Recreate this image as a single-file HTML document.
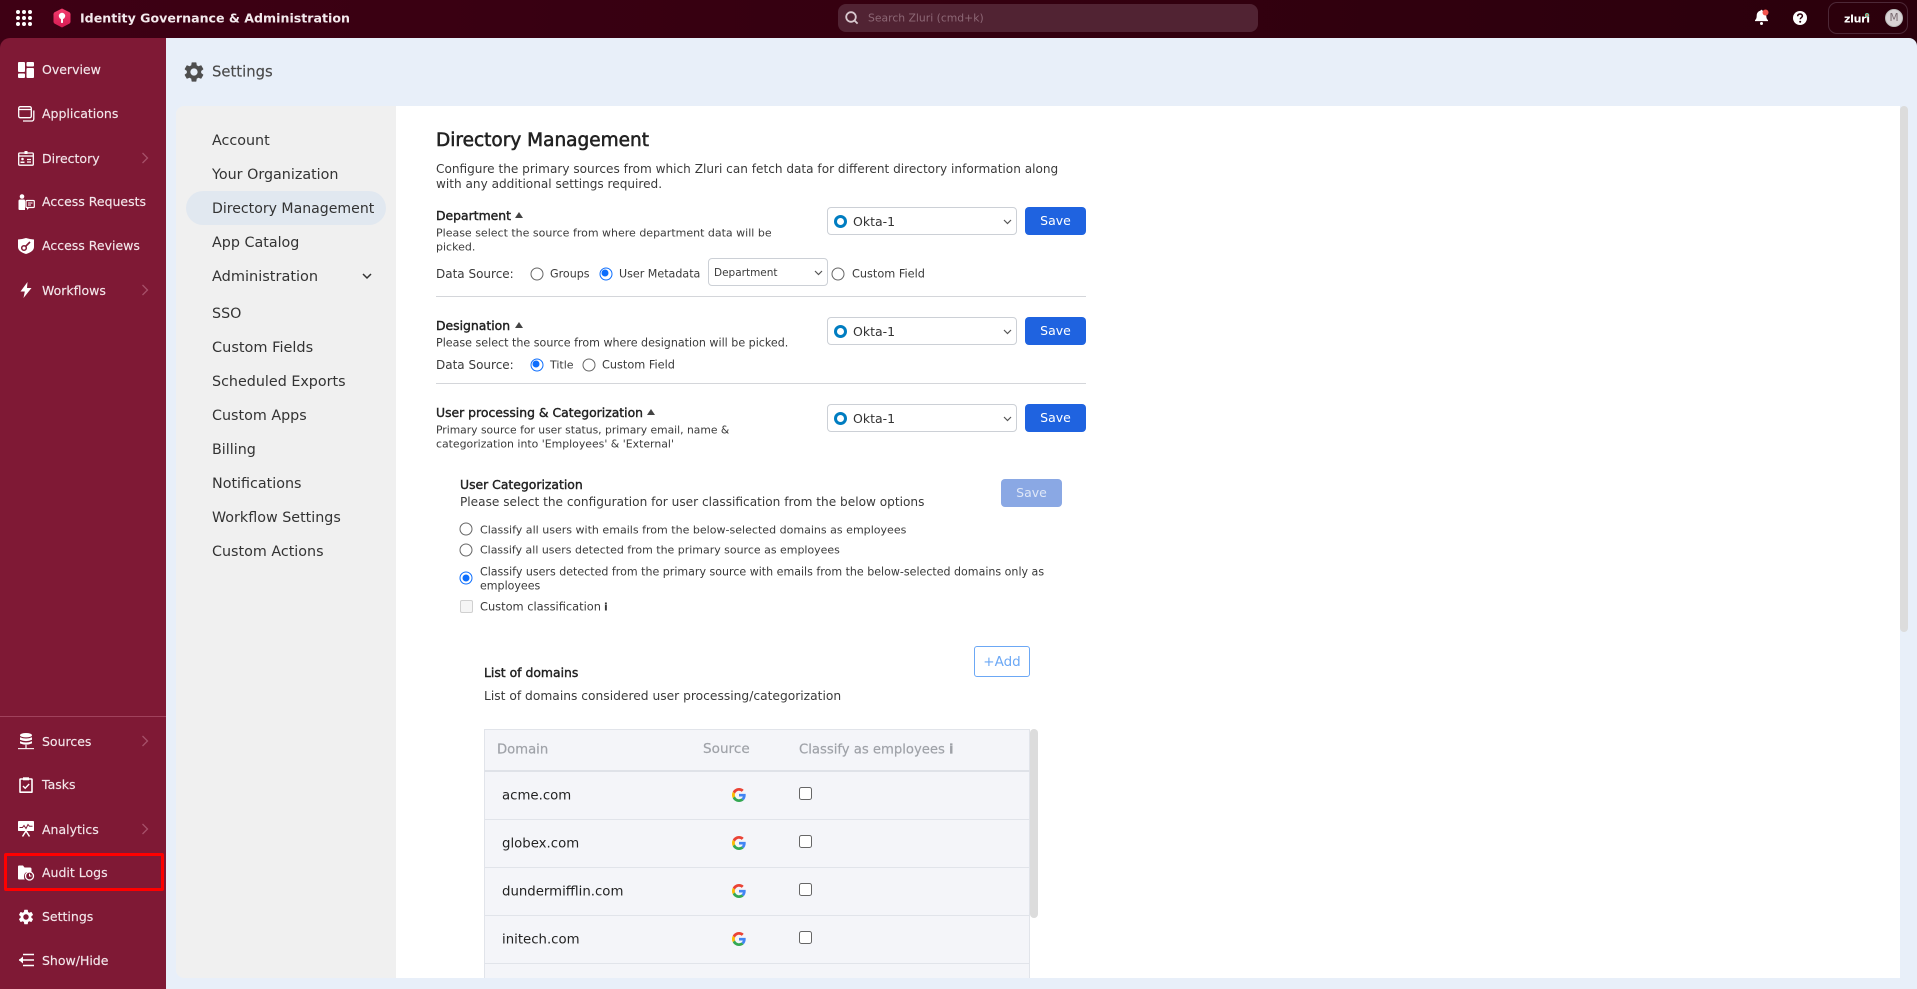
<!DOCTYPE html>
<html lang="en"><head><meta charset="utf-8"><title>Settings</title>
<style>
*{box-sizing:border-box}
html,body{margin:0;padding:0;width:1917px;height:989px;overflow:hidden;background:#e8eff9;font-family:"DejaVu Sans","Liberation Sans",sans-serif}
.a{position:absolute}
.t{position:absolute;white-space:nowrap;line-height:1;transform:translateY(calc(-50% + 1px))}
.s{color:#f3e6ea;font-size:12.5px;left:42px;-webkit-text-stroke:.15px #f3e6ea}
.n{color:#333;font-size:14.3px;left:212px}
.m{font-size:11px;color:#3a3a3a;left:436px}
.b{font-size:12.4px;color:#222;left:436px;-webkit-text-stroke:.4px #222}
.rad{position:absolute;width:13px;height:13px;border-radius:50%;border:1px solid #666;background:#fff;transform:translate(-50%,-50%)}
.rad.on{border:1.5px solid #0d6efd}
.rad.on:after{content:"";position:absolute;left:1.5px;top:1.5px;width:7px;height:7px;border-radius:50%;background:#0d6efd}
.sel{position:absolute;left:827px;width:190px;height:28px;border:1px solid #ccd0d6;border-radius:4px;background:#fff}
.ok{position:absolute;left:6px;top:7px;width:13px;height:13px;border-radius:50%;border:3.5px solid #007dc1}
.sel b{position:absolute;left:25px;top:7.5px;font-weight:400;font-size:12.5px;color:#333;line-height:1;white-space:nowrap}
.btn{position:absolute;left:1025px;width:61px;height:28px;background:#1f63e0;color:#fff;border-radius:4px;font-size:12.5px;line-height:27px;text-align:center}
.hr{position:absolute;left:436px;width:650px;height:1px;background:#d4d6da}
.tri{position:absolute;width:0;height:0;border-left:4px solid transparent;border-right:4px solid transparent;border-bottom:6px solid #444}
.rl{position:absolute;left:484px;width:546px;height:1px;background:#e1e4ea}
.rt{font-size:13.3px;color:#222;left:502px}
.th{font-size:13.2px;color:#9fa2a8;-webkit-text-stroke:.2px #9fa2a8}
.cb{position:absolute;left:799px;width:13px;height:13px;border:1px solid #666;border-radius:2.5px;background:#fff}
svg{position:absolute;overflow:visible}
</style></head><body>

<svg width="0" height="0" style="left:0;top:0"><defs>
<symbol id="gear" viewBox="0 0 24 24"><path d="M19.14 12.94c.04-.3.06-.61.06-.94 0-.32-.02-.64-.07-.94l2.03-1.58c.18-.14.23-.41.12-.61l-1.92-3.32c-.12-.22-.37-.29-.59-.22l-2.39.96c-.5-.38-1.03-.7-1.62-.94l-.36-2.54c-.04-.24-.24-.41-.48-.41h-3.84c-.24 0-.43.17-.47.41l-.36 2.54c-.59.24-1.13.57-1.62.94l-2.39-.96c-.22-.08-.47 0-.59.22L2.74 8.87c-.12.21-.08.47.12.61l2.03 1.58c-.05.3-.09.63-.09.94s.02.64.07.94l-2.03 1.58c-.18.14-.23.41-.12.61l1.92 3.32c.12.22.37.29.59.22l2.39-.96c.5.38 1.03.7 1.62.94l.36 2.54c.05.24.24.41.48.41h3.84c.24 0 .44-.17.47-.41l.36-2.54c.59-.24 1.13-.56 1.62-.94l2.39.96c.22.08.47 0 .59-.22l1.92-3.32c.12-.22.07-.47-.12-.61l-2.01-1.58zM12 15.6c-1.98 0-3.6-1.62-3.6-3.6s1.62-3.6 3.6-3.6 3.6 1.62 3.6 3.6-1.62 3.6-3.6 3.6z"/></symbol>
<symbol id="g" viewBox="0 0 48 48"><path fill="#EA4335" d="M24 9.5c3.54 0 6.71 1.22 9.21 3.6l6.85-6.85C35.9 2.38 30.47 0 24 0 14.62 0 6.51 5.38 2.56 13.22l7.98 6.19C12.43 13.72 17.74 9.5 24 9.5z"/><path fill="#4285F4" d="M46.98 24.55c0-1.57-.15-3.09-.38-4.55H24v9.02h12.94c-.58 2.96-2.26 5.48-4.78 7.18l7.73 6c4.51-4.18 7.09-10.36 7.09-17.65z"/><path fill="#FBBC05" d="M10.53 28.59c-.48-1.45-.76-2.99-.76-4.59s.27-3.14.76-4.59l-7.98-6.19C.92 16.46 0 20.12 0 24c0 3.88.92 7.54 2.56 10.78l7.97-6.19z"/><path fill="#34A853" d="M24 48c6.48 0 11.93-2.13 15.89-5.81l-7.73-6c-2.15 1.45-4.92 2.3-8.16 2.3-6.26 0-11.57-4.22-13.47-9.91l-7.98 6.19C6.51 42.62 14.62 48 24 48z"/></symbol>
<linearGradient id="lg" x1="0" y1="0" x2="0" y2="1"><stop offset="0" stop-color="#f23d6d"/><stop offset="1" stop-color="#d81b54"/></linearGradient>
</defs></svg>

<!-- top bar -->
<div class="a" style="left:0;top:0;width:1917px;height:50px;background:linear-gradient(90deg,#3e0014,#2b000c)"></div>
<div class="a" style="left:166px;top:38px;width:1751px;height:951px;background:#e8eff9;border-top-right-radius:8px"></div>
<svg style="left:16px;top:10px" width="16" height="16" fill="#fff"><circle cx="2" cy="2" r="2"/><circle cx="8" cy="2" r="2"/><circle cx="14" cy="2" r="2"/><circle cx="2" cy="8" r="2"/><circle cx="8" cy="8" r="2"/><circle cx="14" cy="8" r="2"/><circle cx="2" cy="14" r="2"/><circle cx="8" cy="14" r="2"/><circle cx="14" cy="14" r="2"/></svg>
<svg style="left:53px;top:8px" width="18" height="20" viewBox="0 0 18 20"><path d="M9 .5l7.2 3.6q1.3.7 1.3 2v7.6q0 1.3-1.3 2L9 19.5l-7.2-3.8Q.5 15 .5 13.7V6.100q0-1.300 1.300-2z" fill="url(#lg)"/><circle cx="9" cy="8" r="3.200" fill="#fff"/><rect x="8" y="9" width="2" height="6" rx=".8" fill="#fff"/></svg>
<div class="t" style="left:80px;top:18px;font-size:12.6px;font-weight:700;color:#f3e9ec">Identity Governance &amp; Administration</div>

<div class="a" style="left:838px;top:4px;width:420px;height:28px;background:#512333;border-radius:8px"></div>
<svg style="left:845px;top:11px" width="14" height="14" fill="none" stroke="#d8c8ce" stroke-width="1.8"><circle cx="6" cy="6" r="4.8"/><path d="M9.6 9.6l3 3"/></svg>
<div class="t" style="left:868px;top:18px;font-size:10.8px;color:#8d6876">Search Zluri (cmd+k)</div>

<svg style="left:1754px;top:9px" width="16" height="17" viewBox="0 0 16 17"><path d="M6.5 1.800a1 1 0 0 1 2 0c2.800.5 3.800 2.700 3.800 5 0 2.300.6 3.400 1.700 4.500v.8H1v-.8C2.100 10.200 2.700 9.100 2.700 6.800c0-2.300 1-4.500 3.800-5z" fill="#fff"/><circle cx="7.500" cy="14.500" r="1.500" fill="#fff"/><circle cx="11.500" cy="3.500" r="3" fill="#f2544d"/></svg>
<svg style="left:1793px;top:11px" width="14" height="14"><circle cx="7" cy="7" r="7" fill="#fff"/><path d="M4.700 5.300c0-1.500 1-2.300 2.400-2.300 1.300 0 2.300.8 2.300 2 0 1.700-2.200 1.700-2.200 3.300" fill="none" stroke="#2b000c" stroke-width="1.500"/><circle cx="7.200" cy="10.700" r="1" fill="#2b000c"/></svg>
<div class="a" style="left:1828px;top:2px;width:80px;height:32px;border:1px solid #4d2837;border-radius:9px"></div>
<div class="t" style="left:1844px;top:18px;font-size:11px;font-weight:700;color:#fff;letter-spacing:-.3px">zluri</div>
<div class="a" style="left:1865px;top:13px;width:4px;height:4px;border-radius:50%;background:#e85a4f;border:1px solid #6fd3a8"></div>
<div class="a" style="left:1885px;top:9px;width:18px;height:18px;border-radius:50%;background:#d9d3d5;border:1px solid #bbb;color:#7a6a70;font-size:10.5px;line-height:16px;text-align:center">M</div>

<!-- sidebar -->
<div class="a" style="left:0;top:38px;width:166px;height:951px;background:#7f1935;border-top-left-radius:10px"></div>
<div class="a" style="left:0;top:716px;width:166px;height:1px;background:#a0415c"></div>
<div class="a" style="left:4px;top:853px;width:160px;height:38px;border:3px solid #f00;border-radius:2px"></div>

<svg style="left:18px;top:62px" width="16" height="16" fill="#fff"><rect width="7" height="10" rx="1"/><rect y="11.500" width="7" height="4.500" rx="1"/><rect x="8.500" width="7.500" height="4.500" rx="1"/><rect x="8.500" y="6" width="7.500" height="10" rx="1"/></svg>
<div class="t s" style="top:69px">Overview</div>
<svg style="left:18px;top:106px" width="17" height="16" fill="none" stroke="#fff" stroke-width="1.300"><rect x=".7" y=".7" width="12.600" height="11" rx="1.500"/><path d="M.7 3.500h12.600"/><path d="M15.800 4.500v8.500a2 2 0 0 1-2 2H5"/></svg>
<div class="t s" style="top:113px">Applications</div>
<svg style="left:18px;top:150px" width="16" height="16" fill="none" stroke="#fff" stroke-width="1.300"><rect x=".7" y="3" width="14.600" height="12.200" rx="1"/><path d="M.7 6h14.600"/><rect x="6.500" y="1" width="3" height="3" fill="#fff" stroke="none"/><circle cx="4.500" cy="9" r="1.300" fill="#fff" stroke="none"/><path d="M2.500 13h4v-1.500h-4z" fill="#fff" stroke="none"/><path d="M9 9.500h4M9 12h4"/></svg>
<div class="t s" style="top:158px">Directory</div>
<svg style="left:18px;top:194px" width="17" height="17" fill="#fff"><circle cx="4" cy="2.500" r="2.300"/><path d="M.5 7q0-1.500 1.500-1.500h4Q7 5.500 7 7v9H1.500Q.5 16 .5 15z"/><rect x="8" y="6.500" width="8.300" height="7" rx="1" fill="none" stroke="#fff" stroke-width="1.200"/><path d="M10 9h4.500M10 11h3" stroke="#fff"/><path d="M9 13.500v2.500l2.500-2.500z"/></svg>
<div class="t s" style="top:201px">Access Requests</div>
<svg style="left:18px;top:238px" width="16" height="16"><path d="M0 1.500q4-.2 8-1.500 4 1.300 8 1.500v7.500q0 4.500-8 7-8-2.500-8-7z" fill="#fff"/><circle cx="6" cy="10" r="2.300" fill="none" stroke="#7f1935" stroke-width="1.500"/><path d="M7.500 8.500l4.500-4.500" stroke="#7f1935" stroke-width="1.600"/></svg>
<div class="t s" style="top:245px">Access Reviews</div>
<svg style="left:20px;top:282px" width="12" height="16"><path d="M7.500 0L.5 9.500h4.300L3.500 16l8-10H7z" fill="#fff"/></svg>
<div class="t s" style="top:290px">Workflows</div>

<svg style="left:18px;top:733px" width="16" height="17" fill="#fff"><ellipse cx="8" cy="2.200" rx="6" ry="2.200"/><path d="M2 4.200q6 2.600 12 0v2.600q-6 2.600-12 0zM2 8.200q6 2.600 12 0v2.200q-6 2.600-12 0z"/><rect x="7.400" y="12" width="1.200" height="3.500"/><rect y="15" width="16" height="1.200" opacity=".9"/></svg>
<div class="t s" style="top:741px">Sources</div>
<svg style="left:19px;top:777px" width="14" height="16" fill="none" stroke="#fff" stroke-width="1.600"><rect x="1" y="2" width="12" height="13.200" rx=".5"/><rect x="4" y=".3" width="6" height="3" fill="#fff" stroke="none"/><path d="M4 9l2.200 2.200 4-4.200" stroke-width="1.400"/></svg>
<div class="t s" style="top:784px">Tasks</div>
<svg style="left:18px;top:821px" width="16" height="17" fill="#fff"><rect width="16" height="10" rx=".8"/><path d="M1.500 6.500h3l1.500-2 2 3 2-4 1.500 1.800h3" fill="none" stroke="#7f1935" stroke-width="1"/><path d="M8 10L4.500 15.500M8 10l3.500 5.500" stroke="#fff" stroke-width="1.500"/></svg>
<div class="t s" style="top:829px">Analytics</div>
<svg style="left:18px;top:865px" width="16" height="16" fill="#fff"><path d="M0 1.500Q0 .5 1 .5h4l1.500 2H12q1.500 0 1.500 1.500v3H9q-3 1-3 4.500 0 2 .8 3H1q-1 0-1-1z"/><circle cx="11.500" cy="11" r="4" fill="none" stroke="#fff" stroke-width="1.300"/><path d="M11.500 8.800V11h2" fill="none" stroke="#fff"/></svg>
<div class="t s" style="top:872px">Audit Logs</div>
<svg style="left:17px;top:908px" width="18" height="18" fill="#fff"><use href="#gear"/></svg>
<div class="t s" style="top:916px">Settings</div>
<svg style="left:18px;top:953px" width="16" height="14" fill="none" stroke="#fff" stroke-width="1.500"><path d="M5 1.500h11M1 7h15M5 12.500h11"/><path d="M5 3.500L.8 7 5 10.500z" fill="#fff" stroke="none"/></svg>
<div class="t s" style="top:960px">Show/Hide</div>

<svg style="left:141px;top:152px" width="8" height="12" fill="none" stroke="#a65069" stroke-width="1.300"><path d="M1.500 1l5 5-5 5"/></svg>
<svg style="left:141px;top:284px" width="8" height="12" fill="none" stroke="#a65069" stroke-width="1.300"><path d="M1.500 1l5 5-5 5"/></svg>
<svg style="left:141px;top:735px" width="8" height="12" fill="none" stroke="#a65069" stroke-width="1.300"><path d="M1.500 1l5 5-5 5"/></svg>
<svg style="left:141px;top:823px" width="8" height="12" fill="none" stroke="#a65069" stroke-width="1.300"><path d="M1.500 1l5 5-5 5"/></svg>

<!-- settings header -->
<svg style="left:182px;top:60px" width="24" height="24" fill="#4e4e4e"><use href="#gear"/></svg>
<div class="t" style="left:212px;top:72px;font-size:14.8px;color:#4a4a4a;-webkit-text-stroke:.15px #4a4a4a">Settings</div>

<!-- panels -->
<div class="a" style="left:176px;top:106px;width:220px;height:872px;background:#f0f0f0;border-radius:8px 0 0 8px"></div>
<div class="a" style="left:396px;top:106px;width:1504px;height:872px;background:#fff"></div>
<div class="a" style="left:1900px;top:106px;width:8px;height:526px;background:#dcdcdc;border-radius:4px"></div>
<div class="a" style="left:186px;top:191px;width:200px;height:34px;background:#e1e8f0;border-radius:17px"></div>

<div class="t n" style="top:140px">Account</div>
<div class="t n" style="top:174px">Your Organization</div>
<div class="t n" style="top:208px;font-size:14.1px">Directory Management</div>
<div class="t n" style="top:242px">App Catalog</div>
<div class="t n" style="top:276px;font-size:14.5px">Administration</div>
<svg style="left:362px;top:273px" width="10" height="7" fill="none" stroke="#333" stroke-width="1.500"><path d="M1 1l4 4 4-4"/></svg>
<div class="t n" style="top:313px">SSO</div>
<div class="t n" style="top:347px;font-size:14.5px">Custom Fields</div>
<div class="t n" style="top:381px">Scheduled Exports</div>
<div class="t n" style="top:415px">Custom Apps</div>
<div class="t n" style="top:449px">Billing</div>
<div class="t n" style="top:483px">Notifications</div>
<div class="t n" style="top:517px">Workflow Settings</div>
<div class="t n" style="top:551px">Custom Actions</div>

<!-- main -->
<div class="t" style="left:436px;top:140px;font-size:18.5px;color:#222;-webkit-text-stroke:.55px #222">Directory Management</div>
<div class="t m" style="top:168px;font-size:12.1px">Configure the primary sources from which Zluri can fetch data for different directory information along</div>
<div class="t m" style="top:183px;font-size:12.1px">with any additional settings required.</div>

<div class="t b" style="top:215px">Department</div><div class="tri" style="left:515px;top:212px"></div>
<div class="t m" style="top:232px">Please select the source from where department data will be</div>
<div class="t m" style="top:246px">picked.</div>
<div class="sel" style="top:207px"><i class="ok"></i><b>Okta-1</b><svg style="left:175px;top:11px" width="9" height="6" fill="none" stroke="#555" stroke-width="1.200"><path d="M1 1l3.500 3.500L8 1"/></svg></div>
<div class="btn" style="top:207px">Save</div>
<div class="t m" style="top:273px;font-size:12px">Data Source:</div>
<i class="rad" style="left:536.500px;top:273.500px"></i><div class="t m" style="left:550px;top:273px;font-size:11.1px">Groups</div>
<i class="rad on" style="left:605.500px;top:273.500px"></i><div class="t m" style="left:619px;top:273px;font-size:11.1px">User Metadata</div>
<div class="a" style="left:708px;top:258px;width:120px;height:28px;border:1px solid #ccd0d6;border-radius:4px;background:#fff"></div>
<div class="t m" style="left:714px;top:272px;font-size:10.5px">Department</div>
<svg style="left:814px;top:270px" width="9" height="6" fill="none" stroke="#555" stroke-width="1.200"><path d="M1 1l3.500 3.500L8 1"/></svg>
<i class="rad" style="left:838px;top:273.500px"></i><div class="t m" style="left:852px;top:273px;font-size:11.3px">Custom Field</div>
<div class="hr" style="top:296px"></div>

<div class="t b" style="top:325px">Designation</div><div class="tri" style="left:515px;top:322px"></div>
<div class="t m" style="top:342px;font-size:11.1px">Please select the source from where designation will be picked.</div>
<div class="sel" style="top:317px"><i class="ok"></i><b>Okta-1</b><svg style="left:175px;top:11px" width="9" height="6" fill="none" stroke="#555" stroke-width="1.200"><path d="M1 1l3.500 3.500L8 1"/></svg></div>
<div class="btn" style="top:317px">Save</div>
<div class="t m" style="top:364px;font-size:12px">Data Source:</div>
<i class="rad on" style="left:536.500px;top:364.500px"></i><div class="t m" style="left:550px;top:364px;font-size:11px">Title</div>
<i class="rad" style="left:588.500px;top:364.500px"></i><div class="t m" style="left:602px;top:364px;font-size:11.3px">Custom Field</div>
<div class="hr" style="top:383px"></div>

<div class="t b" style="top:412px">User processing &amp; Categorization</div><div class="tri" style="left:647px;top:409px"></div>
<div class="t m" style="top:430px;font-size:10.75px">Primary source for user status, primary email, name &amp;</div>
<div class="t m" style="top:444px;font-size:10.9px">categorization into 'Employees' &amp; 'External'</div>
<div class="sel" style="top:404px"><i class="ok"></i><b>Okta-1</b><svg style="left:175px;top:11px" width="9" height="6" fill="none" stroke="#555" stroke-width="1.200"><path d="M1 1l3.500 3.500L8 1"/></svg></div>
<div class="btn" style="top:404px">Save</div>

<div class="t b" style="left:460px;top:484px">User Categorization</div>
<div class="t m" style="left:460px;top:501px;font-size:12.13px">Please select the configuration for user classification from the below options</div>
<div class="btn" style="left:1001px;top:479px;background:#8aa8e4;color:#dfe7f7">Save</div>

<i class="rad" style="left:466px;top:529px"></i><div class="t m" style="left:480px;top:528.500px;font-size:11.04px">Classify all users with emails from the below-selected domains as employees</div>
<i class="rad" style="left:466px;top:550px"></i><div class="t m" style="left:480px;top:550px;font-size:10.97px">Classify all users detected from the primary source as employees</div>
<i class="rad on" style="left:466px;top:578px"></i><div class="t m" style="left:480px;top:570.500px;font-size:11.05px">Classify users detected from the primary source with emails from the below-selected domains only as</div>
<div class="t m" style="left:480px;top:584.500px;font-size:11.05px">employees</div>
<div class="a" style="left:460px;top:600px;width:13px;height:13px;border:1px solid #d0d0d0;border-radius:2px;background:#f5f5f5"></div>
<div class="t m" style="left:480px;top:605.500px;font-size:11.4px">Custom classification</div>
<div class="t m" style="left:604px;top:605.500px;font-size:11px;font-weight:700">i</div>

<div class="a" style="left:974px;top:646px;width:56px;height:31px;border:1.500px solid #6ca8f5;border-radius:3px;color:#6ca8f5;font-size:13.5px;line-height:31px;text-align:center">+Add</div>
<div class="t b" style="left:484px;top:672px">List of domains</div>
<div class="t m" style="left:484px;top:694.500px;font-size:12.27px">List of domains considered user processing/categorization</div>

<!-- table -->
<div class="a" style="left:484px;top:729px;width:546px;height:249px;background:#f4f5f9;border:1px solid #e1e4ea;border-bottom:0"></div>
<div class="a" style="left:484px;top:770px;width:546px;height:2px;background:#dfe2e8"></div>
<div class="rl" style="top:819px"></div><div class="rl" style="top:867px"></div><div class="rl" style="top:915px"></div><div class="rl" style="top:963px"></div>
<div class="a" style="left:1030px;top:729px;width:8px;height:189px;background:#dcdcdc;border-radius:4px"></div>
<div class="t th" style="left:497px;top:749px">Domain</div>
<div class="t th" style="left:703px;top:749px;font-size:13.6px">Source</div>
<div class="t th" style="left:799px;top:749px">Classify as employees</div>
<div class="t th" style="left:949px;top:749px;font-weight:700">i</div>

<div class="t rt" style="top:795px">acme.com</div>
<div class="t rt" style="top:843px">globex.com</div>
<div class="t rt" style="top:891px">dundermifflin.com</div>
<div class="t rt" style="top:939px">initech.com</div>

<svg style="left:732px;top:788px" width="14" height="14"><use href="#g"/></svg>
<svg style="left:732px;top:836px" width="14" height="14"><use href="#g"/></svg>
<svg style="left:732px;top:884px" width="14" height="14"><use href="#g"/></svg>
<svg style="left:732px;top:932px" width="14" height="14"><use href="#g"/></svg>
<div class="cb" style="top:787px"></div><div class="cb" style="top:835px"></div><div class="cb" style="top:883px"></div><div class="cb" style="top:931px"></div>

</body></html>
